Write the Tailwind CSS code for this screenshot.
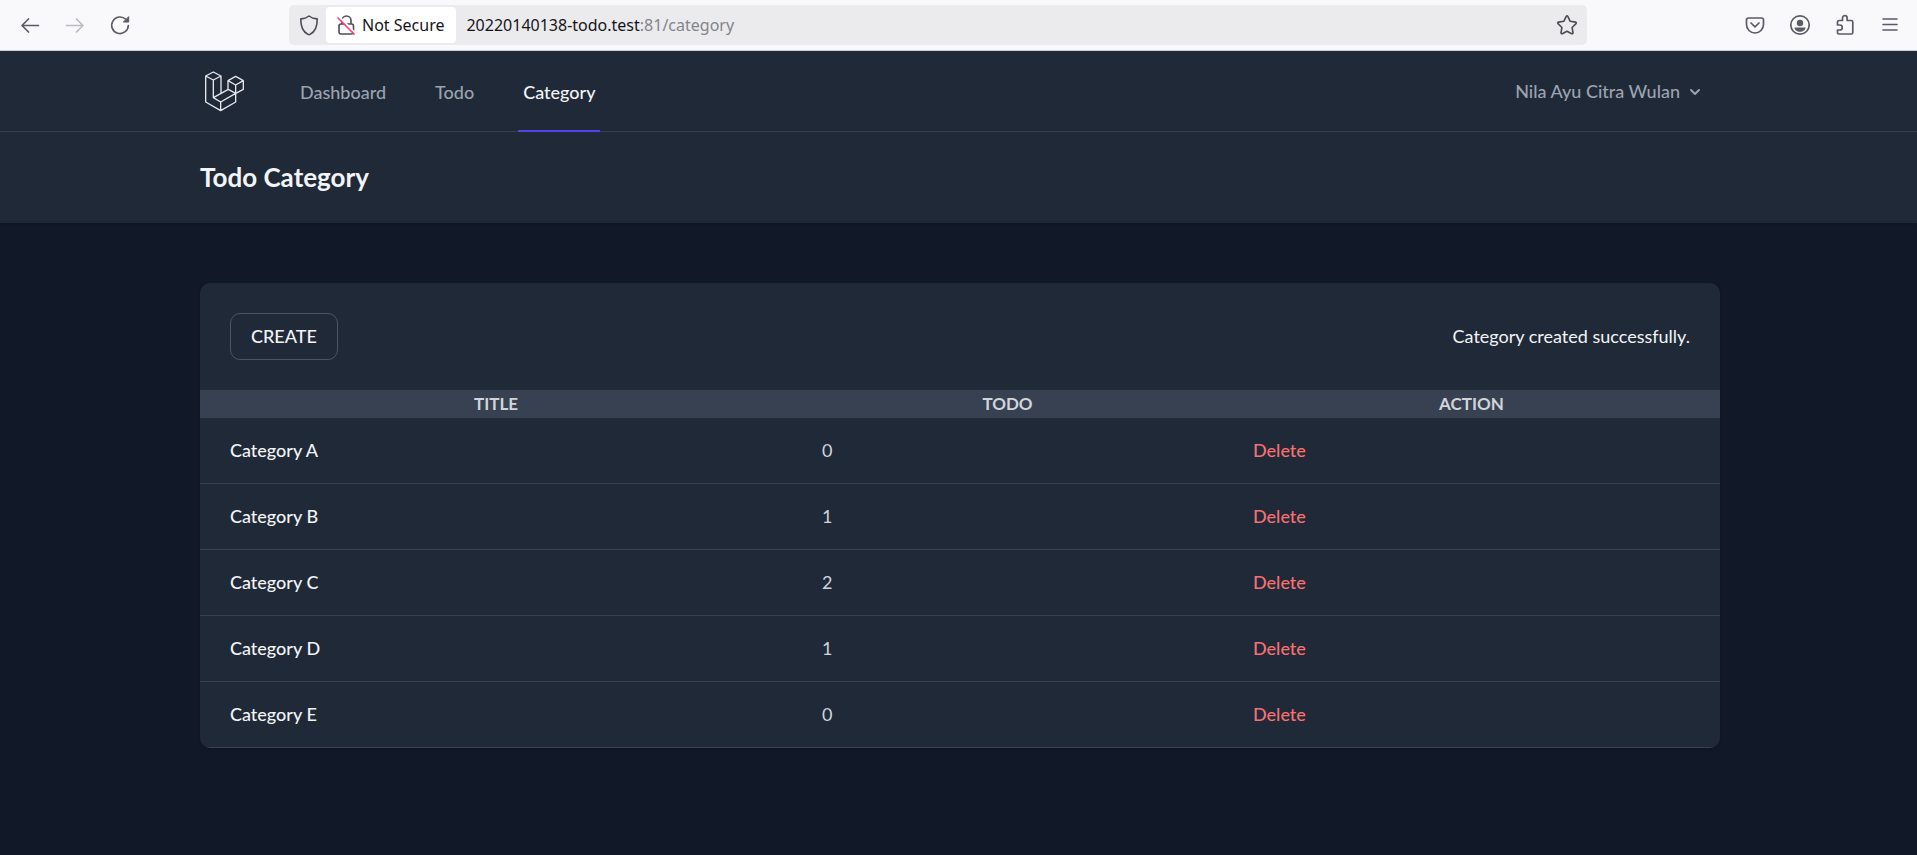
<!DOCTYPE html>
<html lang="en">
<head>
<meta charset="utf-8">
<meta name="viewport" content="width=device-width, initial-scale=1">
<title>Todo Category</title>
<script src="https://cdn.jsdelivr.net/npm/@tailwindcss/browser@4"></script>
</head>
<body class="min-h-screen bg-[#111827] font-['Lato','Noto_Sans',sans-serif] text-[18px] leading-[25px] text-white">

<!-- Browser toolbar -->
<div class="flex h-[51px] items-center border-b border-[#cccccc] bg-[#f9f9fb] font-['Noto_Sans',sans-serif] text-[16px] leading-6 text-[#15141a]">
  <div class="flex w-[289px] shrink-0 items-center gap-[21px] pl-[18px] text-[#5b5b66]">
    <button type="button" aria-label="Back" class="size-6"><svg class="size-6" viewBox="0 0 24 24" fill="none" stroke="currentColor" stroke-width="1.7" stroke-linecap="round" stroke-linejoin="round"><path d="M20.500 12.500H4M10.500 6L4 12.500l6.500 6.500"/></svg></button>
    <button type="button" aria-label="Forward" disabled class="size-6 text-[#bcbcc2]"><svg class="size-6" viewBox="0 0 24 24" fill="none" stroke="currentColor" stroke-width="1.700" stroke-linecap="round" stroke-linejoin="round"><path d="M3.500 12.500H20M13.500 6l6.500 6.500-6.500 6.500"/></svg></button>
    <button type="button" aria-label="Reload" class="size-6"><svg class="size-6" viewBox="0 0 24 24" fill="none" stroke="currentColor" stroke-width="1.600" stroke-linecap="round"><path d="M20.300 12.500a8.300 8.300 0 1 1-2.500-6.200"/><path d="M20.700 4v5h-5z" fill="currentColor" stroke-width="1" stroke-linejoin="round"/></svg></button>
  </div>
  <div class="flex h-10 min-w-0 flex-1 items-center rounded-[5px] bg-[#ebebed]">
    <button type="button" aria-label="Tracking protection" class="ml-2 size-6 text-[#4c4c55]"><svg class="size-6" viewBox="0 0 24 24" fill="none" stroke="currentColor" stroke-width="1.600" stroke-linejoin="round"><path d="M12 3c2.200 1.800 5 2.700 8.200 2.900.2 7-1.700 12.500-7.200 15.500q-1 .5-2 0C5.500 18.400 3.600 12.900 3.800 5.900 7 5.700 9.800 4.800 12 3z"/></svg></button>
    <button type="button" class="ml-[5px] flex h-9 shrink-0 items-center gap-[4px] rounded-[4px] bg-white pr-3 pl-2">
      <svg class="size-6" viewBox="0 0 24 24" fill="none" aria-hidden="true"><g stroke="#4c4c55" stroke-width="1.600" stroke-linejoin="round"><path d="M8 11V7.500a4.500 4.500 0 0 1 9 0V11"/><rect x="5" y="11" width="14.500" height="10" rx="2"/></g><path d="M5 3.500l17 17.500" stroke="#fff" stroke-width="2"/><path d="M3.500 4.500l17 17" stroke="#ff3b6b" stroke-width="1.600"/></svg>
      <span>Not Secure</span>
    </button>
    <div class="min-w-0 flex-1 truncate pl-[10px]">20220140138-todo.test<span class="text-[#84848a]">:81/category</span></div>
    <button type="button" aria-label="Bookmark this page" class="mr-2 size-6 text-[#4c4c55]"><svg class="size-6" viewBox="0 0 24 24" fill="none" stroke="currentColor" stroke-width="1.600" stroke-linejoin="round"><path d="M11.200 3.400q.8-1.300 1.600 0l2.400 4.900 5.300.8q1.300.4.500 1.500l-3.900 3.900.9 5.300q0 1.300-1.300.9L12 18.200l-4.700 2.500q-1.300.4-1.300-.9l.9-5.300L3 10.600q-.8-1.100.5-1.500l5.300-.8z"/></svg></button>
  </div>
  <div class="flex w-[330px] shrink-0 items-center justify-end gap-[21px] pr-[15px] text-[#5b5b66]">
    <button type="button" aria-label="Save to Pocket" class="size-6"><svg class="size-6" viewBox="0 0 24 24" fill="none" stroke="currentColor" stroke-width="1.700" stroke-linecap="round" stroke-linejoin="round"><path d="M5.500 5h13a2 2 0 0 1 2 2v4.500a8.500 8.500 0 0 1-17 0V7a2 2 0 0 1 2-2z"/><path d="M8 10l4 3.800L16 10"/></svg></button>
    <button type="button" aria-label="Account" class="size-6"><svg class="size-6" viewBox="0 0 24 24" fill="none"><circle cx="12" cy="12" r="9.200" stroke="currentColor" stroke-width="1.700"/><circle cx="12" cy="10" r="3.200" fill="currentColor"/><path d="M6.500 14.500h11c0 2.500-2.500 4.300-5.500 4.300s-5.500-1.800-5.500-4.300z" fill="currentColor"/></svg></button>
    <button type="button" aria-label="Extensions" class="size-6"><svg class="size-6" viewBox="0 0 24 24" fill="none" stroke="currentColor" stroke-width="1.700" stroke-linejoin="round"><path d="M4.500 12V9q0-1.500 1.500-1.500h3.500V5a2.300 2.300 0 0 1 4.600 0v2.500h4Q19.800 7.500 19.800 9v10.500q0 1.500-1.500 1.500H6q-1.500 0-1.500-1.500V17h2.300a2.500 2.500 0 0 0 0-5z"/></svg></button>
    <button type="button" aria-label="Menu" class="size-6"><svg class="size-6" viewBox="0 0 24 24" fill="none" stroke="currentColor" stroke-width="1.600" stroke-linecap="round"><path d="M5 6h14M5 11.500h14M5 17h14"/></svg></button>
  </div>
</div>

<!-- Primary navigation -->
<nav class="border-b border-[#374151] bg-[#1f2937]">
  <div class="mx-auto -mb-px flex h-[81px] w-full max-w-[1603px] justify-between pr-10 pl-[43px]">
    <div class="flex">
      <a href="#" aria-label="Home" class="flex items-center">
        <svg class="size-[45px]" viewBox="30 42 135 135" fill="none" stroke="#e5e7eb" stroke-width="4" stroke-linejoin="round" aria-hidden="true">
          <path d="M47 63L70 51L93 63L70 75ZM47 63V141L92 167L137 141V90M70 75V128L92 141V167M93 63V115M70 128L115 103L137 115L92 141M114 77L137 64L160 77L137 90ZM114 77V103M160 77V103L137 115"/>
        </svg>
      </a>
      <div class="ml-[50px] flex gap-[39px] font-medium text-[#9ca3af]">
        <a href="#" class="flex items-center border-b-2 border-transparent px-[5px] pt-1">Dashboard</a>
        <a href="#" class="flex items-center border-b-2 border-transparent px-[5px] pt-1">Todo</a>
        <a href="#" aria-current="page" class="flex items-center border-b-2 border-[#4f46e5] px-[5px] pt-1 text-[#f3f4f6]">Category</a>
      </div>
    </div>
    <div class="flex items-center pr-[15px]">
      <button type="button" class="flex items-center gap-[5px] font-medium text-[#9ca3af]">
        Nila Ayu Citra Wulan
        <svg class="size-5" viewBox="0 0 20 20" fill="currentColor" aria-hidden="true"><path fill-rule="evenodd" d="M5.293 7.293a1 1 0 011.414 0L10 10.586l3.293-3.293a1 1 0 111.414 1.414l-4 4a1 1 0 01-1.414 0l-4-4a1 1 0 010-1.414z" clip-rule="evenodd"/></svg>
      </button>
    </div>
  </div>
</nav>

<!-- Page heading -->
<header class="bg-[#1f2937] shadow">
  <div class="mx-auto w-full max-w-[1603px] py-[30px] pr-10 pl-[43px]">
    <h2 class="text-[26px] leading-[31px] font-bold text-[#f3f4f6]">Todo Category</h2>
  </div>
</header>

<main class="mx-auto w-full max-w-[1603px] py-[60px] pr-10 pl-[43px]">
  <div class="overflow-hidden rounded-[10px] bg-[#1f2937] shadow-sm">
    <div class="flex items-center justify-between p-[30px]">
      <a href="#" class="rounded-[10px] border border-[#4b5563] px-5 py-[10px] font-medium text-[#f3f4f6]">CREATE</a>
      <p class="text-[#f3f4f6]">Category created successfully.</p>
    </div>
    <table class="w-full table-fixed border-separate border-spacing-0 text-left">
      <colgroup><col class="w-[592px]"><col class="w-[431px]"><col></colgroup>
      <thead class="bg-[#374151] text-center text-[17px] leading-[28px] text-[#d1d5db]">
        <tr><th scope="col" class="font-bold">TITLE</th><th scope="col" class="font-bold">TODO</th><th scope="col" class="font-bold">ACTION</th></tr>
      </thead>
      <tbody class="text-[#d1d5db] [&_td]:border-b [&_td]:border-[#374151] [&_th]:border-b [&_th]:border-[#374151]">
        <tr class="h-[66px]"><th scope="row" class="px-[30px] font-medium text-[#f3f4f6]">Category A</th><td class="px-[30px]">0</td><td class="px-[30px]"><button type="button" class="font-medium text-[#f87171]">Delete</button></td></tr>
        <tr class="h-[66px]"><th scope="row" class="px-[30px] font-medium text-[#f3f4f6]">Category B</th><td class="px-[30px]">1</td><td class="px-[30px]"><button type="button" class="font-medium text-[#f87171]">Delete</button></td></tr>
        <tr class="h-[66px]"><th scope="row" class="px-[30px] font-medium text-[#f3f4f6]">Category C</th><td class="px-[30px]">2</td><td class="px-[30px]"><button type="button" class="font-medium text-[#f87171]">Delete</button></td></tr>
        <tr class="h-[66px]"><th scope="row" class="px-[30px] font-medium text-[#f3f4f6]">Category D</th><td class="px-[30px]">1</td><td class="px-[30px]"><button type="button" class="font-medium text-[#f87171]">Delete</button></td></tr>
        <tr class="h-[66px]"><th scope="row" class="px-[30px] font-medium text-[#f3f4f6]">Category E</th><td class="px-[30px]">0</td><td class="px-[30px]"><button type="button" class="font-medium text-[#f87171]">Delete</button></td></tr>
      </tbody>
    </table>
  </div>
</main>
</body>
</html>
